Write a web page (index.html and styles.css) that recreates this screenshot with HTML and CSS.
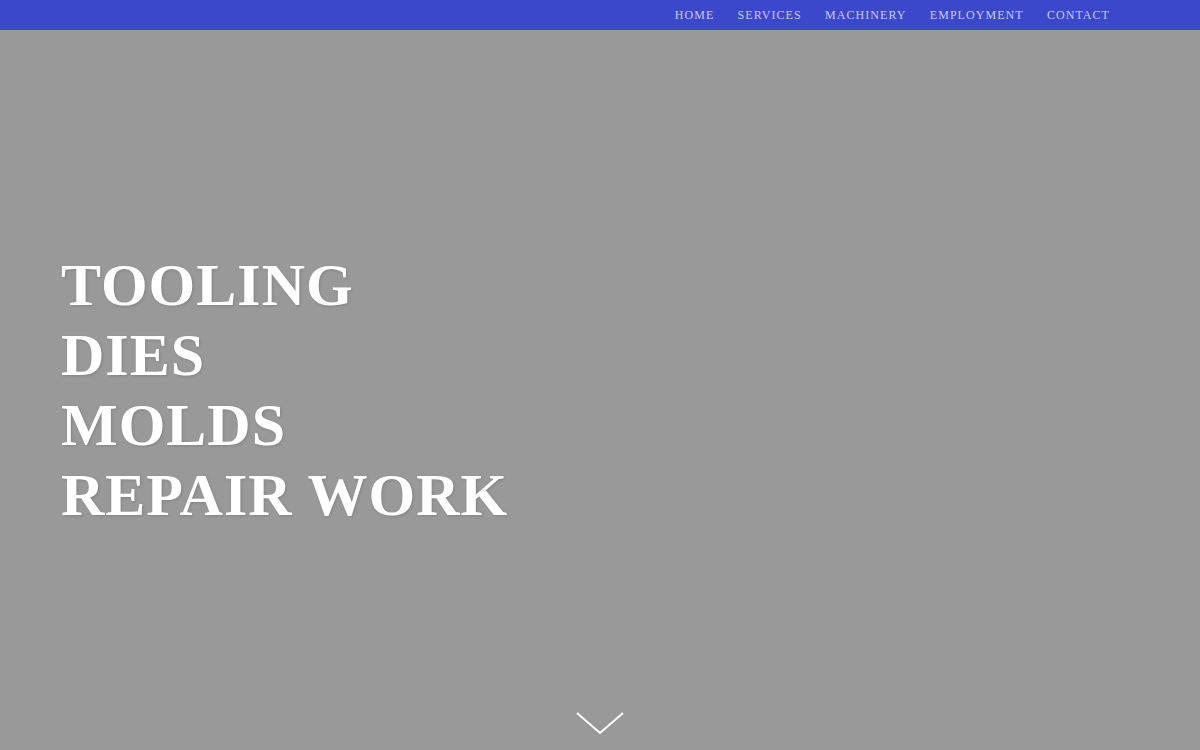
FILE: index.html
```html
<!DOCTYPE html>
<html lang="en">
<head>
<meta charset="utf-8">
<title>Tooling, Dies, Molds, Repair Work</title>
<link rel="stylesheet" href="styles.css">
</head>
<body>
<header class="topbar">
  <nav class="menu">
    <a href="#" class="menu-link">Home</a>
    <a href="#" class="menu-link">Services</a>
    <a href="#" class="menu-link">Machinery</a>
    <a href="#" class="menu-link">Employment</a>
    <a href="#" class="menu-link">Contact</a>
  </nav>
</header>
<main class="hero">
  <h1 class="hero-title">
    <span>Tooling</span>
    <span>Dies</span>
    <span>Molds</span>
    <span>Repair Work</span>
  </h1>
  <a href="#" class="scroll-down" aria-label="Scroll down">
    <svg width="48" height="24" viewBox="0 0 48 24">
      <polyline points="1,1 24,21 47,1" fill="none" stroke="#fff" stroke-width="2"/>
    </svg>
  </a>
</main>
</body>
</html>
```

FILE: styles.css
```css
* { box-sizing: border-box; }

html, body {
  margin: 0;
  height: 100%;
}

body {
  background: #999999;
  font-family: "Liberation Serif", "Times New Roman", serif;
  overflow: hidden;
}

.topbar {
  height: 30px;
  background: #3c48cc;
  display: flex;
  justify-content: flex-end;
  align-items: center;
  padding-right: 90px;
}

.menu {
  display: flex;
  gap: 23.3px;
}

.menu-link {
  color: #c9cdf2;
  text-decoration: none;
  text-transform: uppercase;
  font-size: 12px;
  letter-spacing: 1.05px;
  line-height: 30px;
}

.hero {
  position: relative;
  height: 720px;
  display: flex;
  flex-direction: column;
  justify-content: center;
  padding-left: 61px;
}

.hero-title {
  margin: 0;
  color: #ffffff;
  font-size: 60px;
  font-weight: bold;
  line-height: 70px;
  letter-spacing: 1px;
  text-transform: uppercase;
  text-shadow: 1px 1px 3px rgba(0, 0, 0, 0.15);
  display: flex;
  flex-direction: column;
}

.scroll-down {
  position: absolute;
  left: 576px;
  bottom: 14px;
  display: block;
  line-height: 0;
}
```
